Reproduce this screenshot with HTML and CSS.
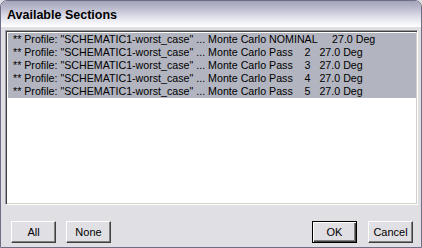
FILE: index.html
```html
<!DOCTYPE html>
<html>
<head>
<meta charset="utf-8">
<link rel="stylesheet" href="styles.css">
</head>
<body>
<div class="window">
  <div class="titlebar">Available Sections</div>
  <div class="content">
    <div class="listbox">
      <div class="row sel">** Profile: "SCHEMATIC1-worst_case" ... Monte Carlo NOMINAL     27.0 Deg</div>
      <div class="row sel">** Profile: "SCHEMATIC1-worst_case" ... Monte Carlo Pass    2   27.0 Deg</div>
      <div class="row sel">** Profile: "SCHEMATIC1-worst_case" ... Monte Carlo Pass    3   27.0 Deg</div>
      <div class="row sel">** Profile: "SCHEMATIC1-worst_case" ... Monte Carlo Pass    4   27.0 Deg</div>
      <div class="row sel">** Profile: "SCHEMATIC1-worst_case" ... Monte Carlo Pass    5   27.0 Deg</div>
    </div>
    <div class="buttons">
      <button class="btn">All</button>
      <button class="btn">None</button>
      <div class="spacer"></div>
      <button class="btn default">OK</button>
      <button class="btn">Cancel</button>
    </div>
  </div>
</div>
</body>
</html>
```
FILE: styles.css
```css
html, body {
  margin: 0;
  padding: 0;
  background: #e0dfe3;
}
.window {
  width: 422px;
  height: 248px;
  box-sizing: border-box;
  border: 1px solid #6e6e86;
  border-radius: 7px 7px 0 0;
  background: #e0dfe3;
  display: flex;
  flex-direction: column;
  overflow: hidden;
}
.titlebar {
  height: 26px;
  box-sizing: border-box;
  padding: 3px 0 0 6px;
  line-height: 23px;
  font-family: "Liberation Sans", Arial, sans-serif;
  font-weight: bold;
  font-size: 12.5px;
  color: #000;
  background: linear-gradient(#a2a2ba 0%, #bdbdd0 30%, #dedeea 60%, #f8f8fb 90%, #ffffff 100%);
}
.content {
  flex: 1;
  display: flex;
  flex-direction: column;
  padding: 3px 3px 4px 4px;
}
.listbox {
  height: 175px;
  box-sizing: border-box;
  background: #fff;
  border: 1px solid;
  border-color: #9d9da6 #ffffff #ffffff #9d9da6;
  box-shadow: inset 1px 1px 0 #404040, inset -1px -1px 0 #d4d0c8;
  padding: 2px 1px 0 2px;
  font-family: "Liberation Sans", Arial, sans-serif;
  font-size: 10.67px;
  color: #000;
}
.row {
  height: 13px;
  line-height: 13px;
  padding-left: 5px;
  white-space: pre;
  overflow: hidden;
}
.row.sel {
  background: #b2b4bf;
}
.buttons {
  margin-top: 16px;
  display: flex;
  padding: 0 5px 0 6px;
  height: 22px;
}
.spacer {
  flex: 1;
}
.btn {
  width: 45px;
  height: 22px;
  margin: 0;
  padding: 0;
  box-sizing: border-box;
  background: #e0dfe3;
  border: 1px solid;
  border-color: #ffffff #404040 #404040 #ffffff;
  box-shadow: inset -1px -1px 0 #808080;
  font-family: "Liberation Sans", Arial, sans-serif;
  font-size: 11px;
  color: #000;
}
.btn + .btn {
  margin-left: 10px;
}
.btn.default {
  border: 1px solid #000;
  box-shadow: inset 1px 1px 0 #ffffff, inset -1px -1px 0 #404040, inset -2px -2px 0 #808080;
}
.btn.default + .btn {
  margin-left: 11px;
}
```
